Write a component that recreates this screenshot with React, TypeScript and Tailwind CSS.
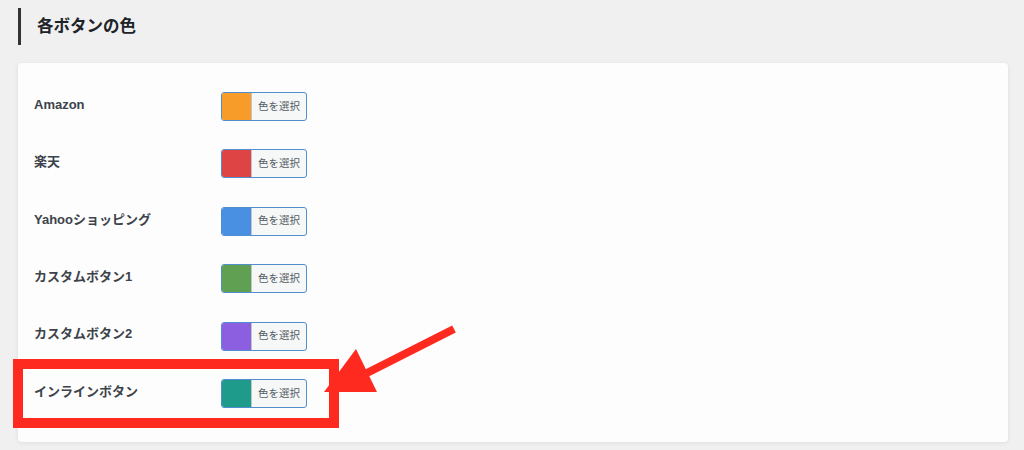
const rows = [
  { label: 'Amazon', color: '#f79b29' },
  { label: '楽天', color: '#df4444' },
  { label: 'Yahooショッピング', color: '#4a90e2' },
  { label: 'カスタムボタン1', color: '#5fa052' },
  { label: 'カスタムボタン2', color: '#8c5ee0' },
  { label: 'インラインボタン', color: '#1f9b8c' },
];

function ColorButton({ color }: { color: string }) {
  return (
    <button
      type="button"
      className="flex h-[29px] w-[86px] overflow-hidden rounded-[3px] border border-[#4f8fcf] bg-[#f6f7f7]"
    >
      <span className="h-full w-[29px]" style={{ backgroundColor: color }} />
      <span className="flex h-full flex-1 items-center justify-center border-l border-[#c3c4c7] text-[10.5px] text-[#555d66]">
        色を選択
      </span>
    </button>
  );
}

export default function App() {
  return (
    <div
      className="relative h-[450px] w-full overflow-hidden bg-[#f0f0f1] px-[18px] pt-[8px]"
      style={{ fontFamily: '"Liberation Sans", "Noto Sans CJK JP", sans-serif' }}
    >
      {/* Section title */}
      <div className="flex h-[37px] items-center border-l-[3px] border-[#333] pl-[16px]">
        <h2 className="text-[16.5px] font-bold text-[#1d2327]">各ボタンの色</h2>
      </div>

      {/* Settings card */}
      <div className="mt-[18px] h-[379px] w-[990px] rounded-[4px] bg-[#fdfdfd] pl-[16px] pt-[29px] shadow-[0_1px_4px_rgba(0,0,0,0.08)]">
        <div className="flex flex-col gap-[28.4px]">
          {rows.map((row) => (
            <div key={row.label} className="flex h-[29px] items-center">
              <span className="w-[187px] pb-[4px] text-[13px] font-bold text-[#3c434a]">{row.label}</span>
              <ColorButton color={row.color} />
            </div>
          ))}
        </div>
      </div>

      {/* Annotation */}
      <div className="absolute left-[13px] top-[359px] h-[69px] w-[326px] border-[10px] border-[#ff2a1f]" />
      <svg className="absolute left-[320px] top-[310px]" width="150" height="100" viewBox="0 0 150 100">
        <line x1="134" y1="19" x2="45" y2="64" stroke="#ff2a1f" strokeWidth="8" />
        <polygon points="36,39 57,82 4,82" fill="#ff2a1f" />
      </svg>
    </div>
  );
}
